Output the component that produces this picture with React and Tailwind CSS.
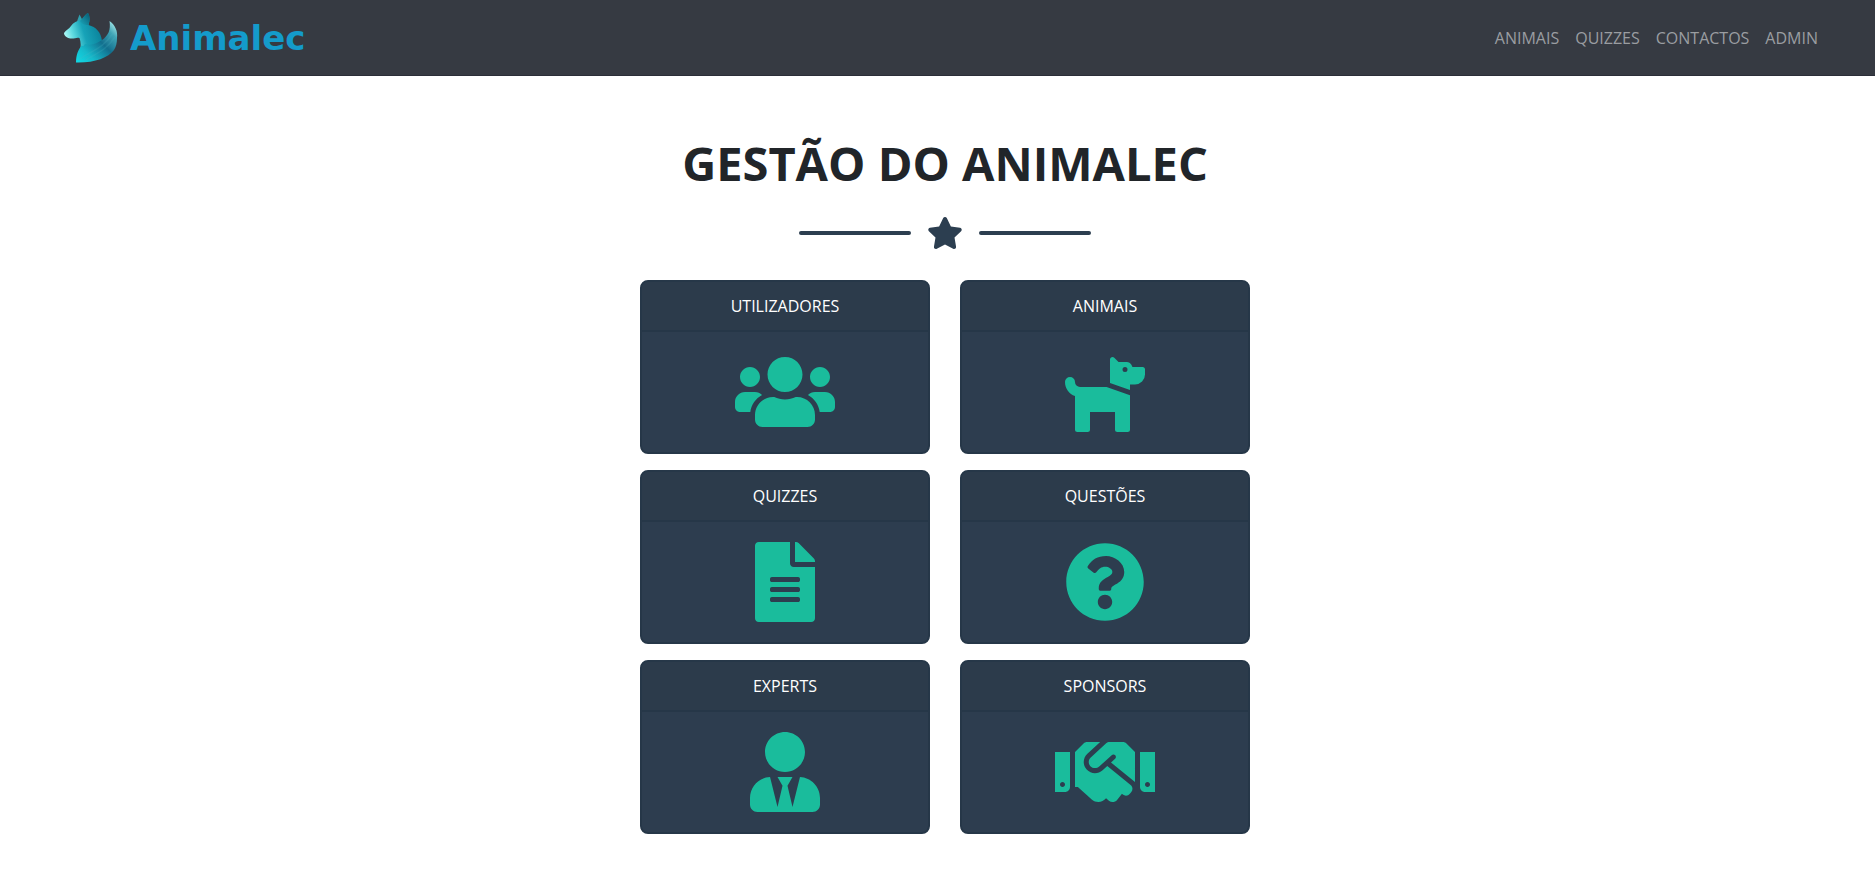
import {
  FaUsers,
  FaDog,
  FaFileAlt,
  FaQuestionCircle,
  FaUserTie,
  FaHandshake,
  FaStar,
} from "react-icons/fa";

const links = ["ANIMAIS", "QUIZZES", "CONTACTOS", "ADMIN"];

const cards = [
  { title: "UTILIZADORES", Icon: FaUsers },
  { title: "ANIMAIS", Icon: FaDog },
  { title: "QUIZZES", Icon: FaFileAlt },
  { title: "QUESTÕES", Icon: FaQuestionCircle },
  { title: "EXPERTS", Icon: FaUserTie },
  { title: "SPONSORS", Icon: FaHandshake },
];

function FoxLogo() {
  return (
    <svg viewBox="0 0 54 50" className="h-[50px] w-[54px]" aria-hidden="true">
      <defs>
        <linearGradient id="head" x1="0" y1="0.6" x2="1" y2="0.3">
          <stop offset="0" stopColor="#b4fbf8" />
          <stop offset="0.22" stopColor="#5fdbe0" />
          <stop offset="0.5" stopColor="#17a3b8" />
          <stop offset="1" stopColor="#087b95" />
        </linearGradient>
        <linearGradient id="ear" x1="0" y1="1" x2="1" y2="0">
          <stop offset="0" stopColor="#1ba6ba" />
          <stop offset="1" stopColor="#075a72" />
        </linearGradient>
        <linearGradient id="tail" x1="0" y1="1" x2="1" y2="0">
          <stop offset="0" stopColor="#10dbe6" />
          <stop offset="0.25" stopColor="#16b9ca" />
          <stop offset="0.55" stopColor="#126f8e" />
          <stop offset="0.78" stopColor="#3fa3b4" />
          <stop offset="1" stopColor="#c8fffb" />
        </linearGradient>
      </defs>
      <path d="M12 11 L15.500 1.500 L19 8 Z" fill="#2f9fae" />
      <path
        d="M0 20 C2 17 5 16 7 13 C9 9.500 13 8 18 7 C20 3.500 22 1 24 0 C26 3 26 8 24.500 12 C32 14 37 19 38 28 C34 34 27 37 16 37 C17 34 17 29 15.500 25 C13 24 11 25.500 8 25.500 C4 25.500 0 23.500 0 20 Z"
        fill="url(#head)"
      />
      <path d="M16 8 C20 3.500 22 1 24 0 C26 3 26 8 24.500 12 C22 12 18 12 16 8 Z" fill="url(#ear)" />
      <path
        d="M45.500 8 C51 12 54 18 53 25 C53 30 52 34 50 37 C44 45 30 50 12 49.500 C12 42 14 37 18 32 C18 34 20 33 21 31 C28 33 33 30 38 27 C44 23 47 17 45.500 8 Z"
        fill="url(#tail)"
      />
      <path
        d="M22 47 C30 41 41 39 51 24 M15 47 C24 38 38 38 49 20"
        fill="none"
        stroke="#4fb4c4"
        strokeOpacity="0.2"
        strokeWidth="1.500"
      />
    </svg>
  );
}

function Card({ title, Icon }) {
  return (
    <a
      href="#"
      className="block overflow-hidden rounded-lg border-2 border-[#263748] bg-[#2d3d4f] text-center"
    >
      <h2 className="border-b-2 border-[#263748] bg-[#2c3b4b] py-3 text-base leading-6 text-white">
        {title}
      </h2>
      <div className="flex justify-center p-5">
        <Icon className="h-20 w-[100px] text-[#1abc9c]" aria-hidden="true" />
      </div>
    </a>
  );
}

export default function App() {
  return (
    <div className="min-h-screen bg-white font-['Open_Sans','Noto_Sans',sans-serif] text-[#212529]">
      <header className="flex items-center justify-between border-b border-[#2b2e38] bg-[#363a42] pt-[13px] pr-[57px] pb-3 pl-16">
        <a
          href="#"
          className="flex items-center gap-3 font-['DejaVu_Sans',sans-serif] text-[34px] leading-10 font-bold text-[#149bcb]"
        >
          <FoxLogo />
          <span>Animalec</span>
        </a>
        <nav className="flex gap-4 text-base leading-6 text-[#9a9da1]">
          {links.map((label) => (
            <a key={label} href="#">
              {label}
            </a>
          ))}
        </nav>
      </header>

      <main className="flex flex-col items-center pt-[57px] pb-12 pl-[15px]">
        <h1 className="text-[47px] leading-[60px] font-bold">GESTÃO DO ANIMALEC</h1>
        <div className="mt-6 mb-[31px] flex items-center gap-4 text-[#2c3e50]">
          <span className="h-1 w-28 rounded-full bg-current" />
          <FaStar className="h-8 w-9" aria-hidden="true" />
          <span className="h-1 w-28 rounded-full bg-current" />
        </div>
        <div className="grid w-full max-w-[610px] grid-cols-2 gap-x-[30px] gap-y-4">
          {cards.map((card) => (
            <Card key={card.title} {...card} />
          ))}
        </div>
      </main>
    </div>
  );
}
